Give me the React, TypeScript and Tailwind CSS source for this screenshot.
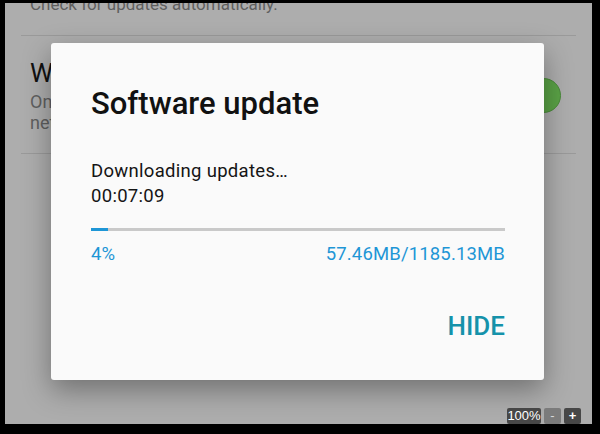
import React from "react";

function SettingsBehind() {
  return (
    <div className="relative w-[587px] h-[421px] ml-[5px] mt-[3px] bg-[#adadad] overflow-hidden">
      <p className="mt-[-10px] pl-[25px] text-[17px] leading-[22px] text-[#5f5f5f]">
        Check for updates automatically.
      </p>
      <div className="mx-[16px] mt-[20px] h-px bg-[#9a9a9a]" />
      <div className="flex items-center justify-between pl-[25px] pr-[31px] pt-[21px]">
        <div>
          <p className="text-[26px] leading-[32px] text-[#111]">Wi-Fi only</p>
          <p className="mt-[2px] text-[18px] leading-[21px] text-[#5f5f5f]">
            Only download updates automatically via Wi-Fi
            <br />
            network connections.
          </p>
        </div>
        <div className="flex items-center">
          <div className="w-[40px] h-[16px] rounded-full bg-[#7fae72] -mr-[12px]" />
          <div className="w-[35px] h-[35px] rounded-full bg-[#5aa246] border border-[#4a8a3a]" />
        </div>
      </div>
      <div className="mx-[16px] mt-[20px] h-px bg-[#9a9a9a]" />
    </div>
  );
}

function UpdateDialog() {
  const progress = 4;
  return (
    <div className="absolute left-[51px] top-[43px] w-[493px] h-[337px] bg-[#fafafa] rounded-[3px] shadow-[0_10px_28px_rgba(0,0,0,0.35)] pr-[39px] pl-[40px] pt-[43px]">
      <h2 className="text-[31px] leading-[36px] font-medium text-[#111]">Software update</h2>
      <div className="mt-[37px] text-[18.5px] leading-[25px] tracking-[0.3px] text-[#151515]">
        <p>Downloading updates…</p>
        <p>00:07:09</p>
      </div>
      <div className="mt-[19px] h-[3px] bg-[#c9c9c9]">
        <div className="h-full bg-[#1e96d6]" style={{ width: `${progress}%` }} />
      </div>
      <div className="mt-[12px] flex justify-between text-[18.5px] leading-[22px] tracking-[0.15px] text-[#1e96d6]">
        <span>{progress}%</span>
        <span>57.46MB/1185.13MB</span>
      </div>
      <div className="mt-[46px] flex justify-end">
        <button className="text-[26px] leading-[30px] font-medium text-[#1592aa]">HIDE</button>
      </div>
    </div>
  );
}

export default function App() {
  return (
    <div className="relative w-[600px] h-[434px] bg-black overflow-hidden font-['Roboto',sans-serif]">
      <SettingsBehind />
      <UpdateDialog />
      <div className="absolute left-[507px] top-[408px] flex gap-[3px] font-['Liberation_Sans',sans-serif] text-[13px] leading-[16px] text-white">
        <span className="h-[16px] w-[34px] rounded-[2px] bg-[#474747] text-center">100%</span>
        <span className="h-[16px] w-[17px] rounded-[2px] bg-[#7b7b7b] text-center text-[#d8d8d8]">-</span>
        <span className="h-[16px] w-[17px] rounded-[2px] bg-[#474747] text-center font-bold">+</span>
      </div>
    </div>
  );
}
